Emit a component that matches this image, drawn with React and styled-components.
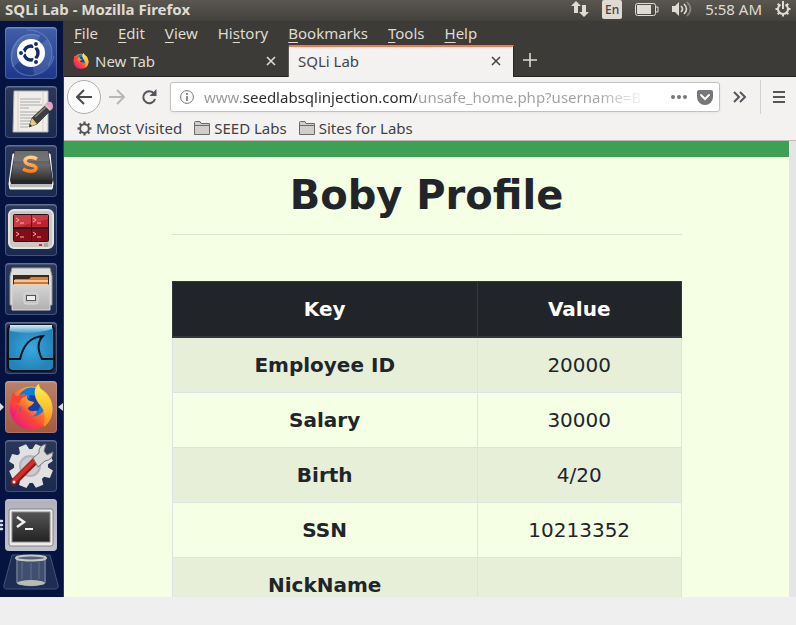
import React from "react";
import styled, { createGlobalStyle } from "styled-components";

const GlobalStyle = createGlobalStyle`
  *, *::before, *::after { box-sizing: border-box; }
  body { margin: 0; background: #efefef; }
  button, input { font: inherit; color: inherit; }
  button { border: 0; padding: 0; background: none; }
  svg { display: block; flex: none; }
`;

const Screen = styled.div`
  display: grid;
  grid-template-rows: 21px minmax(0, 1fr);
  height: 100vh;
  padding-bottom: 28px;
  overflow: hidden;
  font: 15px/20px "Noto Sans", sans-serif;
  color: #3c3c3c;
`;

const Panel = styled.header`
  display: flex;
  align-items: center;
  justify-content: space-between;
  padding: 0 5px 3px 5px;
  line-height: 18px;
  background: linear-gradient(#59574f, #42413b);
  color: #dfdbd2;
  white-space: nowrap;
`;

const PanelTitle = styled.span`
  font-weight: 700;
`;

const Indicators = styled.div`
  display: flex;
  align-items: center;
  gap: 13px;
`;

const Language = styled.button`
  width: 20px;
  height: 19px;
  border-radius: 2px;
  background: #dfdbd2;
  color: #45443e;
  font-size: 12px;
  font-weight: 500;
  line-height: 19px;
`;

const Desktop = styled.div`
  display: grid;
  grid-template-columns: 64px minmax(0, 1fr);
  min-height: 0;
`;

const Launcher = styled.nav`
  display: flex;
  flex-direction: column;
  align-items: center;
  gap: 7px;
  min-height: 0;
  padding: 6px 2px 0 0;
  overflow: hidden;
  background: #04133f;
  border-right: 1px solid #27396e;
`;

const tileColors = {
  blue: "linear-gradient(#4060a8, #1d3789)",
  glass: "linear-gradient(#2b3858, #1a294f)",
  orange: "linear-gradient(#b9816a, #a4593d)",
  silver: "linear-gradient(#b1b2bb, #c2c2c9)",
};

const Tile = styled.button`
  display: grid;
  place-items: center;
  flex: none;
  position: relative;
  width: 52px;
  height: 52px;
  border-radius: 4px;
  background: ${(p) => tileColors[p.$tone]};
  box-shadow: inset 0 0 0 1px rgba(170, 190, 235, 0.28), inset 0 2px 0 rgba(220, 230, 255, 0.16);
`;

const Trash = styled.button`
  flex: none;
  margin-top: -6px;
`;

const Marker = styled.svg`
  position: absolute;
  top: ${(p) => (p.$pips ? 20 : 22)}px;
  ${(p) => (p.$side === "left" ? "left: -5px;" : "right: -6px;")}
`;

const Browser = styled.main`
  display: flex;
  flex-direction: column;
  min-width: 0;
  min-height: 0;
  background: #f3f2f1;
`;

const MenuBar = styled.nav`
  display: flex;
  flex: none;
  gap: 20px;
  height: 24px;
  padding-left: 10px;
  background: #3c3b37;
  color: #dfdbd2;
`;

const MenuButton = styled.button`
  height: 24px;
  line-height: 24px;

  u { text-underline-offset: 3px; text-decoration-thickness: 1px; }
`;

const TabStrip = styled.div`
  display: flex;
  flex: none;
  height: 32px;
  background: #3c3b37;
  border-bottom: 1px solid #252522;
`;

const Tab = styled.div`
  display: flex;
  align-items: flex-start;
  width: 225px;
  height: 32px;
  padding: 0 12px 0 9px;
  background: ${(p) => (p.$active ? "#f3f2f1" : "transparent")};
  color: ${(p) => (p.$active ? "#45454a" : "#dfdbd2")};
  border-top: 2px solid ${(p) => (p.$active ? "#ee7b4b" : "transparent")};
  border-right: 1px solid ${(p) => (p.$active ? "#252522" : "#5c5b57")};
`;

const TabTitle = styled.button`
  flex: 1;
  display: flex;
  align-items: center;
  gap: 6px;
  height: 28px;
  text-align: left;
`;

const IconButton = styled.button`
  display: grid;
  place-items: center;
  width: ${(p) => p.$width || 16}px;
  height: ${(p) => p.$height || 16}px;
  color: ${(p) => p.$color || "inherit"};
`;

const NavBar = styled.div`
  display: flex;
  flex: none;
  align-items: center;
  height: 40px;
  padding-left: 3px;
  color: #55555a;
`;

const BackButton = styled.button`
  display: grid;
  place-items: center;
  width: 34px;
  height: 34px;
  border: 1px solid #aeadac;
  border-radius: 50%;
  background: #fcfcfc;
  color: #4b4b4f;
`;

const AddressBar = styled.form`
  display: flex;
  flex: 1;
  align-items: center;
  gap: 10px;
  min-width: 0;
  height: 30px;
  margin-left: 5px;
  padding: 0 6px 0 9px;
  border: 1px solid #c3c2c1;
  border-radius: 3px;
  background: #fff;
  box-shadow: 0 1px 3px rgba(0, 0, 0, 0.06);
  color: #77777b;
`;

const AddressInput = styled.input`
  flex: 1;
  min-width: 0;
  height: 28px;
  margin: 0 20px 0 0;
  padding: 0;
  border: 0;
  outline: 0;
  background: linear-gradient(90deg, #98989b 39px, #2b2b2e 39px, #2b2b2e 213px, #a0a0a2 213px, #a0a0a2 390px, rgba(160, 160, 162, 0.1) 100%);
  -webkit-background-clip: text;
  background-clip: text;
  -webkit-text-fill-color: transparent;
`;

const Divider = styled.span`
  align-self: center;
  width: 1px;
  height: 34px;
  background: #d2d1d0;
`;

const Bookmarks = styled.nav`
  display: flex;
  flex: none;
  gap: 12px;
  height: 24px;
  padding-left: 13px;
  border-bottom: 1px solid #bdbcbb;
`;

const Bookmark = styled.a`
  display: flex;
  align-items: center;
  gap: 4px;
  height: 22px;
  color: #3f3f44;
  text-decoration: none;
  white-space: nowrap;
`;

const Viewport = styled.div`
  flex: 1;
  min-height: 0;
  overflow: hidden;
  background: #e5e5e5;
  padding-right: 7px;
`;

const Page = styled.div`
  min-height: 100%;
  background: #f4ffe4;
  color: #212529;
  font-family: "DejaVu Sans", sans-serif;
`;

const PageBar = styled.div`
  height: 16px;
  background: #3ea055;
`;

const Container = styled.section`
  max-width: 540px;
  margin: 0 auto;
  padding: 14px 15px 0;
`;

const Title = styled.h1`
  margin: 0;
  font-size: 40px;
  line-height: 48px;
  font-weight: 700;
  text-align: center;
`;

const Rule = styled.hr`
  margin: 15px 0 46px;
  border: 0;
  border-top: 1px solid rgba(0, 0, 0, 0.1);
`;

const ProfileTable = styled.table`
  width: 100%;
  border-collapse: collapse;
  font-size: 20px;
  line-height: 30px;
  text-align: center;

  th, td { padding: 12px; border: 1px solid #dee2e6; }
  th:first-child { width: 60%; }
  tbody tr:nth-child(odd) { background: #e7efd9; }
  thead { background: #212529; color: #fff; }
  thead th { border-color: #32383e; border-bottom-width: 2px; }
`;

const Draw = ({ w = 16, h = w, box, children, ...rest }) => (
  <svg width={w} height={h} viewBox={box || `0 0 ${w} ${h}`} fill="none" aria-hidden="true" {...rest}>
    {children}
  </svg>
);

const Stroke = (props) => <Draw stroke="currentColor" strokeWidth="2" {...props} />;

const gearTeeth = [0, 45, 90, 135, 180, 225, 270, 315];

const DashIcon = () => (
  <Draw w={52}>
    <g stroke="#9db4e7" strokeOpacity=".35" strokeWidth="1.2">
      <path d="M8 40C2 22 15 2 35 9" />
      <path d="M22 3c22 0 31 21 21 36" />
      <path d="M49 29c-5 22-34 26-41 9" />
    </g>
    <path d="M8 40C-1 22 15 1 35 9L25 26Z" fill="#9eb4e3" fillOpacity=".22" />
    <path d="M42 12c11 12 4 33-13 36l-3-22Z" fill="#9eb4e3" fillOpacity=".22" />
    <circle cx="26" cy="26" r="14" fill="#fff" />
    <circle cx="26" cy="26" r="7" stroke="#14296b" strokeWidth="3.4" />
    <g stroke="#fff" strokeWidth="1.5">
      <path d="m26 26-11 0M26 26l6-10M26 26l6 10" />
      <circle cx="16" cy="26" r="2.7" fill="#14296b" />
      <circle cx="31" cy="17" r="2.7" fill="#14296b" />
      <circle cx="31" cy="35" r="2.7" fill="#14296b" />
    </g>
    <circle cx="26" cy="26" r="5" fill="#fff" />
  </Draw>
);

const EditorIcon = () => (
  <Draw w={52}>
    <path d="M9 5h34v41H8Z" fill="#efeee8" stroke="#aeb0b3" />
    <path d="M13 6v39M38 6v39" stroke="#e8b8b8" strokeWidth=".7" />
    <path d="M15 13h21M15 16h20M15 19h22M15 22h9M15 26h20M15 29h19M15 32h16M15 35h14M15 38h12M15 41h8" stroke="#aaabad" strokeWidth="1" />
    <path d="m24 41 3-9 14-13 5 5-14 14Z" fill="#3d3e3d" stroke="#222" strokeWidth=".7" />
    <path d="m30 31 12-11" stroke="#888" strokeWidth="1.5" />
    <path d="m27 32 5 6-8 3Z" fill="#e6cc78" />
    <path d="m24 41 1-3 2 2Z" fill="#222" />
    <path d="m39 19 3-3 6 6-3 3Z" fill="#c8c8c6" />
    <path d="m41 18 2-2q5-1 5 5l-2 2Z" fill="#ee9bcd" />
  </Draw>
);

const SublimeIcon = () => (
  <Draw w={52}>
    <defs>
      <linearGradient id="key" x1="0" y1="0" x2="0" y2="1"><stop stopColor="#555" /><stop offset=".5" stopColor="#686868" /><stop offset="1" stopColor="#303030" /></linearGradient>
      <linearGradient id="ess" x1="0" y1="0" x2="0" y2="1"><stop stopColor="#ffd089" /><stop offset="1" stopColor="#ff7e16" /></linearGradient>
    </defs>
    <path d="M8 9h37l3 30-1 5H5l-1-5Z" fill="#e9e9e9" stroke="#fff" />
    <path d="M5 39h42v3H5Z" fill="#bbb" />
    <path d="M10 5h33l5 30-1 4H6l-1-4Z" fill="#262626" />
    <path d="M10 6h33l4 29H6Z" fill="url(#key)" />
    <path d="M10 6h33l1 10H8Z" fill="#999" fillOpacity=".35" />
    <path d="M32 14c-5-3-12-2-12 2 0 5 11 3 11 7 0 4-8 4-13 1" stroke="url(#ess)" strokeWidth="3.500" />
  </Draw>
);

const TerminatorIcon = () => (
  <Draw w={52}>
    <rect x="4" y="6" width="44" height="38" rx="5" fill="#c8c9c3" stroke="#e4e4de" strokeWidth="2" />
    <rect x="8" y="10" width="36" height="28" rx="2" fill="#241318" />
    <path d="M9 11h17v12H9ZM27 11h16v12H27Z" fill="#c51f2b" />
    <path d="M9 25h17v12H9ZM27 25h16v12H27Z" fill="#850c18" />
    <path d="M9 11h34v4L9 24Z" fill="#fff" fillOpacity=".12" />
    <path d="m11 14 3 2-3 2m4 1h4m9-5 3 2-3 2m4 1h4M11 28l3 2-3 2m4 1h4m9-5 3 2-3 2m4 1h4" stroke="#f1b2b2" />
    <path d="M34 41h3" stroke="#ef1e28" strokeWidth="2" />
    <rect x="39" y="39" width="4" height="4" fill="#a8aaa5" />
  </Draw>
);

const FilesIcon = () => (
  <Draw w={52}>
    <defs><linearGradient id="drawer" x1="0" y1="0" x2="0" y2="1"><stop stopColor="#d4d4d4" /><stop offset="1" stopColor="#b1b1b1" /></linearGradient></defs>
    <path d="M7 5h38l2 8v29H5V13Z" fill="#dededb" stroke="#999" />
    <rect x="8" y="12" width="36" height="11" fill="#382b24" />
    <path d="M10 16h14l2-2h17v8H10Z" fill="#de7f31" />
    <path d="M9 17h34v5H9Z" fill="#f5c59a" />
    <path d="M9 19h34v2H9Z" fill="#d4732d" />
    <path d="M7 22h38v25H7Z" fill="url(#drawer)" stroke="#d7d7d7" />
    <rect x="19" y="30" width="14" height="11" rx="2" fill="#c7c7c7" stroke="#dcdcdc" />
    <rect x="21.500" y="32.500" width="9" height="5" fill="#eee" stroke="#555" />
  </Draw>
);

const WiresharkIcon = () => (
  <Draw w={52}>
    <defs>
      <radialGradient id="sea"><stop stopColor="#38a8de" /><stop offset="1" stopColor="#2384ba" /></radialGradient>
      <linearGradient id="foam" x1="0" y1="0" x2="0" y2="1"><stop stopColor="#d8eaf1" /><stop offset="1" stopColor="#479cca" /></linearGradient>
    </defs>
    <rect x="3" y="3" width="46" height="46" rx="5" fill="url(#sea)" stroke="#0b1119" strokeWidth="2" />
    <path d="M5 3h42v4Q26 14 5 9Z" fill="url(#foam)" />
    <path d="M4 37h11c3-13 9-22 23-23-7 7-4 17-1 23h11" stroke="#07131c" strokeWidth="2" />
  </Draw>
);

const FirefoxIcon = ({ size = 52, name }) => (
  <Draw w={size} box={size === 52 ? "0 0 52 52" : "3 3 46 46"}>
    <defs>
      <linearGradient id={name} x1=".9" y1=".1" x2=".2" y2=".9"><stop stopColor="#ffd83a" /><stop offset=".4" stopColor="#ff8a2a" /><stop offset=".7" stopColor="#ff4537" /><stop offset="1" stopColor="#e8207c" /></linearGradient>
      <linearGradient id={`${name}-tail`} x1="0" y1="0" x2="0" y2="1"><stop stopColor="#fff35a" /><stop offset=".5" stopColor="#ffc52c" /><stop offset="1" stopColor="#ff8426" /></linearGradient>
    </defs>
    <circle cx="26" cy="27" r="21.500" fill={`url(#${name})`} />
    <circle cx="27" cy="21" r="14.500" fill="#0f7ce0" />
    <path d="M25 14q9 0 10 8t-8 12l-8-5Z" fill="#1c3fa4" />
    <path d="M8 11c1 3 3 4 5 4 3-2 7-2 9 0-1 3 1 5 7 6-1 4-6 4-6 7 3 4 7 1 9 2-1 6-9 7-13 4-3-2-4-6-3-9L8 37C3 28 5 18 8 11Z" fill={`url(#${name})`} />
    <path d="M6 18 8 10c1 4 3 5 5 5 3-2 7-2 9 0-4 1-7 3-7 7-4 0-7 0-9-4Z" fill="#fa4238" />
    <path d="M34 3c0 6 7 8 10 14 6 11 4 22-5 29-1-4 2-9 0-15-2-7-8-9-9-17-1-5 1-9 4-11Z" fill={`url(#${name}-tail)`} />
  </Draw>
);

const SettingsIcon = () => (
  <Draw w={52}>
    <g fill="#dfe1e3">
      {gearTeeth.map((a) => <path key={a} d="m22 4 8 0 2 11H20Z" transform={`rotate(${a + 22} 26 26)`} />)}
      <circle cx="26" cy="26" r="17" />
    </g>
    <circle cx="25" cy="26" r="10" fill="#c8ccd0" stroke="#b1b4b8" strokeWidth="2" />
    <path d="m9 42 21-21" stroke="#8e1717" strokeWidth="7" strokeLinecap="round" />
    <path d="m9 41 21-21" stroke="#d32d2a" strokeWidth="4" strokeLinecap="round" />
    <path d="m28 18 6-5q-1-7 7-9l-2 7 3 4 6-3q0 8-8 9l-7 6Z" fill="#d6d8d8" stroke="#777" />
    <circle cx="9" cy="42" r="1.500" fill="#fff" />
  </Draw>
);

const TerminalIcon = () => (
  <Draw w={52}>
    <defs><linearGradient id="shell" x1="0" y1="0" x2="0" y2="1"><stop stopColor="#555" /><stop offset="1" stopColor="#222" /></linearGradient></defs>
    <rect x="4" y="10" width="44" height="37" rx="2" fill="#ededeb" stroke="#858585" />
    <rect x="7" y="13" width="38" height="30" fill="url(#shell)" stroke="#888" />
    <path d="m12 18 7 5-7 5" stroke="#f2f2ef" strokeWidth="2.500" />
    <path d="M20 30h8" stroke="#f2f2ef" strokeWidth="2" />
  </Draw>
);

const TrashIcon = () => (
  <Draw w={58} h={43}>
    <path d="M10 3h38l8 30q1 4-3 4H5q-4 0-3-4Z" fill="#1d2d54" stroke="#435379" />
    <path d="M14 6h30v25q-15 7-30 0Z" fill="#75839a" fillOpacity=".4" />
    <ellipse cx="29" cy="31" rx="14" ry="3" fill="#babcb3" />
    <path d="M15 7v24M43 7v24" stroke="#7d8798" />
    <ellipse cx="29" cy="6" rx="15" ry="2.500" fill="#536076" stroke="#c4c7c4" strokeWidth="2" />
    <path d="M20 10v17m9-16v17m8-18v17" stroke="#ccd2db" strokeOpacity=".12" strokeWidth="2" />
  </Draw>
);

const FolderIcon = () => (
  <Draw>
    <path d="M.5 14.500V2.500q0-1 1-1H6l1 2h8.500v11Z" fill="#cfcecc" stroke="#6b6a69" />
    <path d="M1 5.500h14" stroke="#6b6a69" />
  </Draw>
);

const CogIcon = () => (
  <Draw w={15} box="0 0 16 16">
    <circle cx="8" cy="8" r="4.600" stroke="#55555a" strokeWidth="2" />
    {gearTeeth.map((a) => <path key={a} d="M8 .5v3" stroke="#55555a" strokeWidth="2.400" transform={`rotate(${a} 8 8)`} />)}
  </Draw>
);

const CloseIcon = () => <Stroke w={10}><path d="m1 1 8 8m0-8-8 8" strokeWidth="1.600" /></Stroke>;

const launcherItems = [
  { label: "Dash", tone: "blue", Icon: DashIcon },
  { label: "Text Editor", tone: "glass", Icon: EditorIcon },
  { label: "Sublime Text", tone: "glass", Icon: SublimeIcon },
  { label: "Terminator", tone: "glass", Icon: TerminatorIcon },
  { label: "Files", tone: "glass", Icon: FilesIcon },
  { label: "Wireshark", tone: "glass", Icon: WiresharkIcon },
  { label: "Firefox", tone: "orange", Icon: () => <FirefoxIcon name="fox-large" />, active: true },
  { label: "System Settings", tone: "glass", Icon: SettingsIcon },
  { label: "Terminal", tone: "silver", Icon: TerminalIcon, windows: true },
];

const menus = [["", "F", "ile"], ["", "E", "dit"], ["", "V", "iew"], ["Hi", "s", "tory"], ["", "B", "ookmarks"], ["", "T", "ools"], ["", "H", "elp"]];

const profile = [["Employee ID", "20000"], ["Salary", "30000"], ["Birth", "4/20"], ["SSN", "10213352"], ["NickName", ""]];

const TopPanel = () => (
  <Panel>
    <PanelTitle>SQLi Lab - Mozilla Firefox</PanelTitle>
    <Indicators>
      <IconButton aria-label="Network" $width={18}>
        <Draw w={18} h={16} fill="currentColor"><path d="M5 0 0 5h3v7h4V5h3ZM13 16l5-5h-3V4h-4v7H8Z" /></Draw>
      </IconButton>
      <Language>En</Language>
      <IconButton aria-label="Battery" $width={24}>
        <Draw w={24} h={13}><rect x=".5" y=".5" width="20" height="12" rx="2" stroke="currentColor" /><path d="M2 2h14v9H2Z" fill="currentColor" /><path d="M21 4h2v5h-2" stroke="currentColor" /></Draw>
      </IconButton>
      <IconButton aria-label="Sound" $width={20}>
        <Draw w={20} h={16} stroke="currentColor" strokeWidth="1.600"><path d="M0 5h3l4-4v14l-4-4H0Z" fill="currentColor" stroke="none" /><path d="M9 5q3 3 0 6M12 3q5 5 0 10" /><path d="M15 1q7 7 0 14" opacity=".4" /></Draw>
      </IconButton>
      <time>5:58 AM</time>
      <IconButton aria-label="System">
        <Draw stroke="currentColor" strokeWidth="2">
          <path d="M5.500 3.700a5 5 0 1 0 5 0M8 0v8" />
          {gearTeeth.slice(1).map((a) => <path key={a} d="M8 .5v3" transform={`rotate(${a} 8 8)`} />)}
        </Draw>
      </IconButton>
    </Indicators>
  </Panel>
);

const AppLauncher = () => (
  <Launcher aria-label="Launcher">
    {launcherItems.map(({ label, tone, Icon, active, windows }) => (
      <Tile key={label} aria-label={label} $tone={tone}>
        <Icon />
        {active && <Marker $side="left" width="4" height="8" aria-hidden="true"><path d="m0 0 4 4-4 4Z" fill="#d9dde9" /></Marker>}
        {active && <Marker $side="right" width="5" height="8" aria-hidden="true"><path d="M5 0 0 4l5 4Z" fill="#d9dde9" /></Marker>}
        {windows && <Marker $side="left" $pips width="4" height="12" aria-hidden="true"><path d="M0 2h2M0 6h2M0 10h2" stroke="#d9dde9" strokeWidth="2.500" strokeLinecap="round" /></Marker>}
      </Tile>
    ))}
    <Trash aria-label="Trash"><TrashIcon /></Trash>
  </Launcher>
);

const BrowserChrome = () => (
  <>
    <MenuBar>
      {menus.map(([before, key, after]) => <MenuButton key={key + after}>{before}<u>{key}</u>{after}</MenuButton>)}
    </MenuBar>
    <TabStrip>
      <Tab>
        <TabTitle><FirefoxIcon size={16} name="fox-small" />New Tab</TabTitle>
        <IconButton aria-label="Close New Tab" $width={10} $height={28}><CloseIcon /></IconButton>
      </Tab>
      <Tab $active>
        <TabTitle>SQLi Lab</TabTitle>
        <IconButton aria-label="Close SQLi Lab" $width={10} $height={28}><CloseIcon /></IconButton>
      </Tab>
      <IconButton aria-label="New tab" $width={32} $height={30} $color="#dfdbd2">
        <Stroke w={14}><path d="M7 0v14M0 7h14" strokeWidth="1.600" /></Stroke>
      </IconButton>
    </TabStrip>
    <NavBar>
      <BackButton aria-label="Back"><Stroke><path d="M16 8H1m7-7L1 8l7 7" /></Stroke></BackButton>
      <IconButton aria-label="Forward" $width={32} $height={32} $color="#b9b8b7"><Stroke><path d="M0 8h15M8 1l7 7-7 7" /></Stroke></IconButton>
      <IconButton aria-label="Reload" $width={32} $height={32}>
        <Stroke><path d="M13 4.500A6 6 0 1 0 14 10" /><path d="M15.500 0v7h-7Z" fill="currentColor" stroke="none" /></Stroke>
      </IconButton>
      <AddressBar onSubmit={(e) => e.preventDefault()}>
        <Stroke w={14} strokeWidth="1"><circle cx="7" cy="7" r="6.400" /><path d="M7 6v5M7 3v2" strokeWidth="1.600" /></Stroke>
        <AddressInput aria-label="Address" defaultValue="www.seedlabsqlinjection.com/unsafe_home.php?username=B" />
        <IconButton type="button" aria-label="Page actions"><Draw h={4} fill="currentColor"><circle cx="2" cy="2" r="2" /><circle cx="8" cy="2" r="2" /><circle cx="14" cy="2" r="2" /></Draw></IconButton>
        <IconButton type="button" aria-label="Save to Pocket" $height={28}>
          <Draw h={15}><path d="M2 0h12q2 0 2 2v5a8 8 0 0 1-16 0V2q0-2 2-2Z" fill="currentColor" /><path d="m4 5 4 4 4-4" stroke="#fff" strokeWidth="2" strokeLinecap="round" /></Draw>
        </IconButton>
      </AddressBar>
      <IconButton aria-label="More tools" $width={40} $height={32}><Stroke w={14} h={12}><path d="m1 1 5 5-5 5m6-10 5 5-5 5" /></Stroke></IconButton>
      <Divider />
      <IconButton aria-label="Open menu" $width={35} $height={32}><Stroke w={12}><path d="M0 1h12M0 6h12M0 11h12" /></Stroke></IconButton>
    </NavBar>
    <Bookmarks aria-label="Bookmarks">
      <Bookmark href="#most-visited"><CogIcon />Most Visited</Bookmark>
      <Bookmark href="#seed-labs"><FolderIcon />SEED Labs</Bookmark>
      <Bookmark href="#sites"><FolderIcon />Sites for Labs</Bookmark>
    </Bookmarks>
  </>
);

const ProfilePage = () => (
  <Viewport>
    <Page>
      <PageBar />
      <Container>
        <Title>Boby Profile</Title>
        <Rule />
        <ProfileTable>
          <thead><tr><th scope="col">Key</th><th scope="col">Value</th></tr></thead>
          <tbody>{profile.map(([key, value]) => <tr key={key}><th scope="row">{key}</th><td>{value}</td></tr>)}</tbody>
        </ProfileTable>
      </Container>
    </Page>
  </Viewport>
);

export default function App() {
  return (
    <>
      <GlobalStyle />
      <Screen>
        <TopPanel />
        <Desktop>
          <AppLauncher />
          <Browser>
            <BrowserChrome />
            <ProfilePage />
          </Browser>
        </Desktop>
      </Screen>
    </>
  );
}
